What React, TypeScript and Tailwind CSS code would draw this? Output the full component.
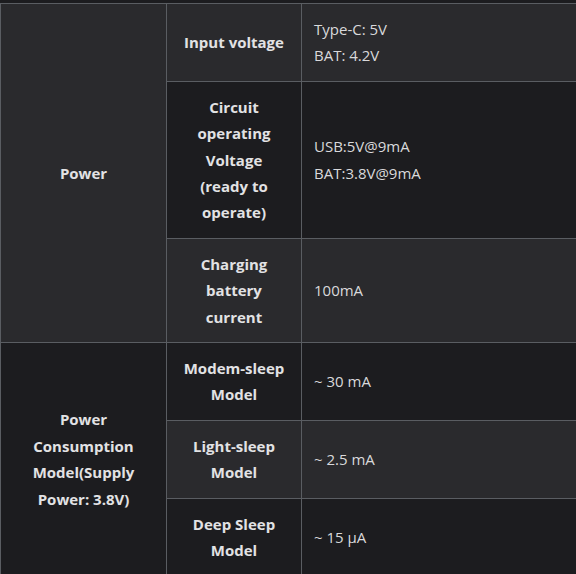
const light = "bg-[#2a2a2d]";
const dark = "bg-[#1c1c1f]";

type Row = { head: string[]; value: string[] };

const power: Row[] = [
  { head: ["Input voltage"], value: ["Type-C: 5V", "BAT: 4.2V"] },
  {
    head: ["Circuit", "operating", "Voltage", "(ready to", "operate)"],
    value: ["USB:5V@9mA", "BAT:3.8V@9mA"],
  },
  { head: ["Charging", "battery", "current"], value: ["100mA"] },
];

const consumption: Row[] = [
  { head: ["Modem-sleep", "Model"], value: ["~ 30 mA"] },
  { head: ["Light-sleep", "Model"], value: ["~ 2.5 mA"] },
  { head: ["Deep Sleep", "Model"], value: ["~ 15 µA"] },
];

function Lines({ lines }: { lines: string[] }) {
  return (
    <>
      {lines.map((l, i) => (
        <span key={i} className="block">
          {l}
        </span>
      ))}
    </>
  );
}

const th = "border border-[#5a5d62] px-3 py-3 text-center align-middle font-bold text-[#e2e2e4]";
const td = "border border-[#5a5d62] px-3 py-3 text-left align-middle font-normal text-[#d9d9db]";

export default function App() {
  const groups = [
    { title: ["Power"], rows: power },
    { title: ["Power", "Consumption", "Model(Supply", "Power: 3.8V)"], rows: consumption },
  ];
  let idx = 0;

  return (
    <div
      className="h-[574px] w-[576px] overflow-hidden bg-[#1c1c1f] text-[15px] leading-[26.4px]"
      style={{ fontFamily: '"Open Sans", "Noto Sans", sans-serif' }}
    >
      <table className="mt-[3px] w-[600px] table-fixed border-collapse">
        <colgroup>
          <col className="w-[166px]" />
          <col className="w-[135px]" />
          <col />
        </colgroup>
        <tbody>
          {groups.map((g) =>
            g.rows.map((r, i) => {
              const bg = idx++ % 2 === 0 ? light : dark;
              return (
                <tr key={r.head.join()} className={bg}>
                  {i === 0 && (
                    <th rowSpan={g.rows.length} className={th}>
                      <Lines lines={g.title} />
                    </th>
                  )}
                  <th className={th}>
                    <Lines lines={r.head} />
                  </th>
                  <td className={td}>
                    <Lines lines={r.value} />
                  </td>
                </tr>
              );
            })
          )}
        </tbody>
      </table>
    </div>
  );
}
